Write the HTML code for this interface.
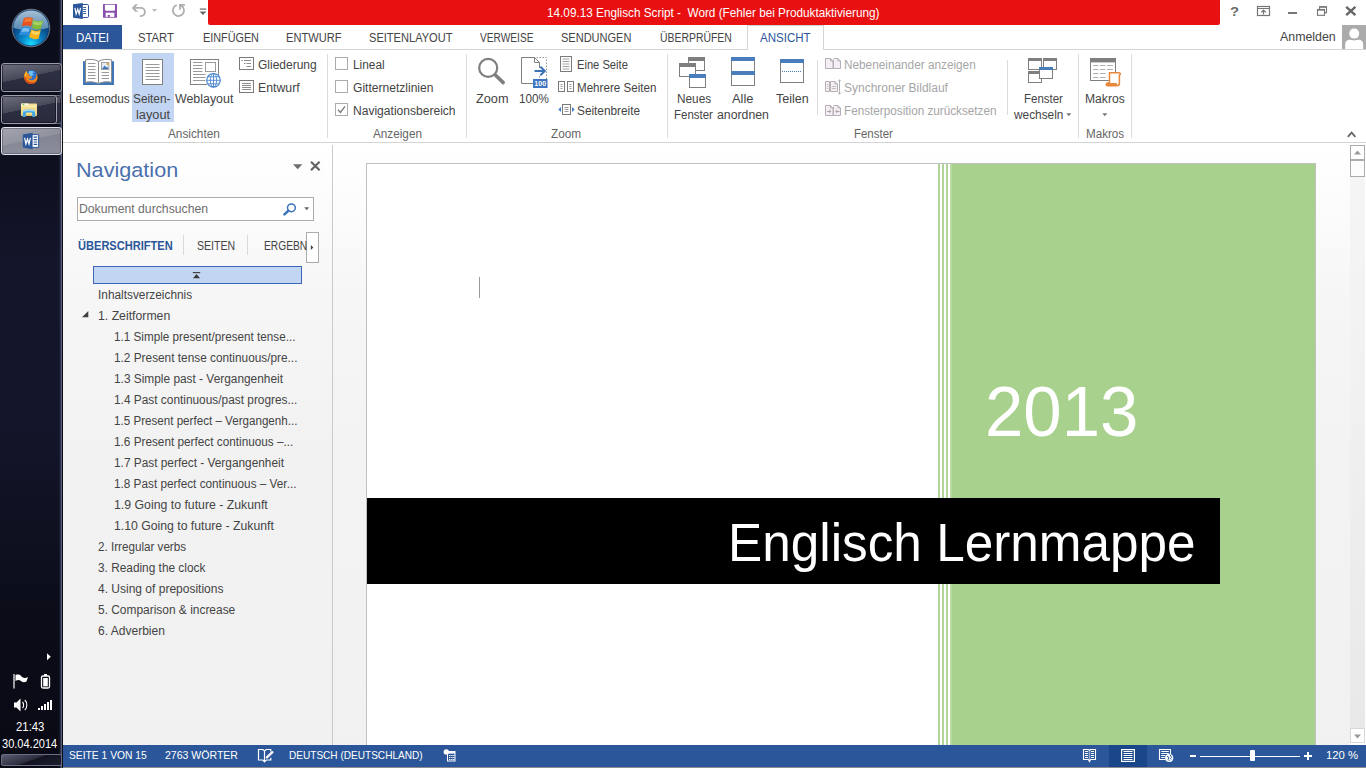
<!DOCTYPE html>
<html><head><meta charset="utf-8"><title>14.09.13 Englisch Script - Word</title>
<style>
*{box-sizing:border-box;margin:0;padding:0}
html,body{width:1366px;height:768px;overflow:hidden;background:#fff;font-family:"Liberation Sans",sans-serif}
.a{position:absolute}
.t{position:absolute;white-space:nowrap;line-height:1;transform-origin:0 50%;font-family:"Liberation Sans",sans-serif}
svg{position:absolute;overflow:visible}
/* taskbar */
#taskbar{position:absolute;left:0;top:0;width:63px;height:768px;background:linear-gradient(90deg,rgba(0,0,0,0) 0,rgba(0,0,0,0) 58px,rgba(30,36,70,.5) 60px,#5a5f78 61.5px,#0a0b14 62.5px),linear-gradient(180deg,#0b0d1a 0,#0c0e1c 140px,#13162a 260px,#13162a 430px,#0b0c18 620px,#090a14 100%)}
.tb{position:absolute;left:1px;width:61px;height:29px;border-radius:3px;border:1px solid #9b9daa;box-shadow:inset 0 0 0 1px rgba(10,10,20,.55);background:linear-gradient(168deg,rgba(255,255,255,.30) 0,rgba(255,255,255,.13) 46%,rgba(255,255,255,0) 47%),linear-gradient(180deg,#2f3144,#292b3d)}
.tb.act{border-color:#e2e3e8;box-shadow:inset 0 0 0 1px rgba(40,40,60,.35);background:linear-gradient(168deg,rgba(255,255,255,.28) 0,rgba(255,255,255,.10) 46%,rgba(255,255,255,0) 47%),linear-gradient(180deg,#7f818f,#8b8d9b)}
/* word */
#red{position:absolute;left:208px;top:0;width:1012px;height:25px;background:#e81010;border-bottom-right-radius:2px;border-bottom-left-radius:2px}
#filetab{position:absolute;left:63px;top:25px;width:59px;height:25px;background:#2b579a}
#tabline{position:absolute;left:63px;top:49px;width:1303px;height:1px;background:#d4d4d4}
#acttab{position:absolute;left:747px;top:25px;width:77px;height:25px;background:#fff;border:1px solid #d4d4d4;border-bottom:none}
#ribline{position:absolute;left:63px;top:142px;width:1303px;height:1px;background:#d4d4d4}
.sep{position:absolute;width:1px;background:#dcdcdc}
.cb{position:absolute;width:13px;height:13px;border:1px solid #ababab;background:#fff}
/* nav */
#nav{position:absolute;left:63px;top:143px;width:270px;height:602px;background:linear-gradient(180deg,#fff 0,#fdfdfd 40px,#f6f6f6 160px,#f2f2f2 300px,#f1f1f1 100%)}
#navborder{position:absolute;left:332px;top:145px;width:1px;height:600px;background:#cacaca}
#doc{position:absolute;left:333px;top:143px;width:1017px;height:602px;background:linear-gradient(180deg,#fff 0,#fdfdfd 40px,#f6f6f6 160px,#f3f3f3 300px,#f1f1f1 100%)}
#page{position:absolute;left:366px;top:163px;width:950px;height:582px;background:#fff;border-left:1px solid #c0c0c0;border-top:1px solid #c0c0c0;border-right:1px solid #c0c0c0}
#green{position:absolute;left:950px;top:164px;width:365px;height:581px;background:linear-gradient(90deg,#b8daa2 0,#b8daa2 1.5px,#a9d18e 2px)}
.stripe{position:absolute;top:164px;width:2px;height:581px;background:#b1d598}
#black{position:absolute;left:367px;top:498px;width:853px;height:86px;background:#000}
#status{position:absolute;left:63px;top:745px;width:1303px;height:23px;background:#2b579a;border-bottom:1px solid #8a8c92}
#vscroll{position:absolute;left:1350px;top:145px;width:15px;height:598px;background:linear-gradient(180deg,#f6f6f6 0,#f1f1f1 40%,#e8e8e8 100%)}

</style></head>
<body>
<!-- ================= TASKBAR ================= -->
<div id="taskbar">
  <!-- start orb -->
  <svg style="left:11px;top:8px" width="40" height="40" viewBox="0 0 40 40">
    <defs>
      <linearGradient id="orbtop" x1="0" y1="0" x2="0" y2="1">
        <stop offset="0" stop-color="#b9cddd"/><stop offset="1" stop-color="#5b8db5"/>
      </linearGradient>
      <radialGradient id="orbbot" cx="50%" cy="95%" r="70%">
        <stop offset="0" stop-color="#18dcff"/><stop offset=".35" stop-color="#0b8fd0"/><stop offset=".8" stop-color="#0b4f8c"/><stop offset="1" stop-color="#0a3f78"/>
      </radialGradient>
      <clipPath id="orbclip"><circle cx="20" cy="20" r="17.6"/></clipPath>
    </defs>
    <circle cx="20" cy="20" r="18.8" fill="#0a3f78" stroke="#7d8089" stroke-width=".9"/>
    <circle cx="20" cy="20" r="17.6" fill="url(#orbbot)"/>
    <g clip-path="url(#orbclip)">
      <path d="M0 0 H40 V19 C30 23 10 23 0 19Z" fill="url(#orbtop)" opacity=".95"/>
    </g>
    <path d="M12.8 10.2 C15.8 8.9 19 9 21.9 10 L20.2 18.4 C17.2 17.2 14 17.2 10.8 18.4Z" fill="#e8501e"/>
    <path d="M14 10.8 C16.5 10 19 10 21 10.6 L20.3 14 C18 13.4 15.5 13.6 13.2 14.4Z" fill="#f58a3c" opacity=".7"/>
    <path d="M22 11.8 C25.4 13.6 28.8 13.6 32.3 12.2 L29.8 20.8 C26.6 22 23.8 21.6 21 19.6Z" fill="#7fba3a"/>
    <path d="M22.6 13 C25.6 14.4 28.6 14.4 31.4 13.4 L30.4 16.8 C27.6 17.6 24.8 17.4 22 16Z" fill="#b5dc78" opacity=".7"/>
    <path d="M10.4 19.6 C13.6 18.4 16.6 18.6 19.5 19.9 L17.8 27.9 C14.8 26.4 11.6 26.2 8.2 27.5Z" fill="#2f8fdc"/>
    <path d="M11.4 20.6 C14 19.8 16.4 20 18.4 20.8 L17.7 24 C15.4 23.2 13 23.2 10.6 24Z" fill="#9dd2f5" opacity=".7"/>
    <path d="M20.2 21.4 C23.4 23.2 26.6 23.2 29.8 21.8 L27.6 30.8 C24.4 31.8 21.2 31.2 18 28.8Z" fill="#f9b21c"/>
    <path d="M20.8 22.8 C23.6 24.2 26.4 24.2 28.8 23.4 L28 26.6 C25.4 27.4 22.8 27 20.2 25.6Z" fill="#fde07a" opacity=".7"/>
  </svg>
  <!-- firefox -->
  <div class="tb" style="top:63px"></div>
  <svg style="left:23px;top:69px" width="16" height="16" viewBox="0 0 16 16">
    <circle cx="8.4" cy="6.6" r="5.6" fill="#2f6fd0"/>
    <path d="M6 2.4 C8 1.4 10.6 2 11.8 3.6 C10.4 3.2 9.4 3.6 9 4.6 C10.4 4.6 11 5.6 10.4 6.6 C9.4 6.2 8.4 6.6 8.2 7.6 C7.2 7.4 6.6 6.6 6.8 5.6 C5.8 5.2 5.4 3.6 6 2.4Z" fill="#6fc3f0"/>
    <path d="M1 7.6 C1 5 2.2 3 4 1.8 C3.6 3 3.8 4 4.6 4.8 C5 4.4 5.6 4.2 6.2 4.4 C5.6 5.4 6 6.6 7.2 7 C8.2 7.2 9 7.6 9.2 8.4 C8.6 9.8 6.8 10 5.6 9.2 C6.4 11.4 9.4 12 11.6 10.2 C13.2 8.8 13.6 6.6 13 4.6 C14 5.6 14.6 7.4 14.6 8.6 C14.4 12.4 11.6 15 8 15 C4 15 1 11.8 1 7.6Z" fill="#ee8a1c"/>
    <path d="M1.2 9 C2 12.6 4.8 15 8 15 C10.6 15 12.8 13.6 13.8 11.4 C11.6 13.6 7.8 14 5 12 C3.4 10.8 2.6 9.2 2.6 7.4Z" fill="#d8481a"/>
    <path d="M1.6 5.4 C2.2 3.8 3 2.6 4 1.8 C3.6 3 3.8 4 4.6 4.8 C3.4 5.6 3 7 3.4 8.4 C2.4 7.6 1.8 6.6 1.6 5.4Z" fill="#f7b52a"/>
  </svg>
  <!-- explorer -->
  <div class="tb" style="top:95px;left:6px;width:56px;border-color:#6c6f80"></div>
  <div class="tb" style="top:95px;width:56px"></div>
  <svg style="left:20px;top:102px" width="18" height="16" viewBox="0 0 18 16">
    <path d="M1 2 C1 1.6 1.3 1.4 1.6 1.4 H16.4 C16.8 1.4 17 1.7 17 2 V13.6 H1Z" fill="#f3dc8c"/>
    <path d="M1 2 C1 1.6 1.3 1.4 1.6 1.4 H8.4 L9.2 3 H1Z" fill="#fbf3cf"/>
    <rect x="2.6" y="1.8" width="1.8" height="1" fill="#3fc43a"/><rect x="4.6" y="1.8" width="3.4" height="1" fill="#fff"/>
    <path d="M1 3.4 H17 V13.6 H1Z" fill="#f4de8e"/>
    <path d="M1 3.4 H17 V5 H1Z" fill="#f9ebb4"/>
    <path d="M1 12.6 H17 V13.8 H1Z" fill="#e2c25e"/>
    <path d="M3.2 8 C6.4 7.2 11.6 7.2 14.8 8 L15.4 15 H12.4 L12 10.8 C10.4 10.4 7.6 10.4 6 10.8 L5.6 15 H2.6Z" fill="#45a6e6"/>
    <path d="M3.2 8 C6.4 7.2 11.6 7.2 14.8 8 L15 9.8 C11.6 8.8 6.4 8.8 3 9.8Z" fill="#a5dcf8"/>
  </svg>
  <!-- word (active) -->
  <div class="tb act" style="top:127px;height:28px"></div>
  <svg style="left:22px;top:132px" width="18" height="18" viewBox="0 0 18 18">
    <path d="M9.5 2.6 H16.6 V15.4 H9.5Z" fill="#fff" stroke="#2b579a" stroke-width="1"/>
    <path d="M11.6 5.2 H15.2 M11.6 7.6 H15.2 M11.6 10 H15.2 M11.6 12.4 H15.2" stroke="#2b579a" stroke-width="1.2"/>
    <path d="M0.8 2.4 L10.6 0.8 V17.2 L0.8 15.6Z" fill="#2b579a"/>
    <path d="M2.6 5.8 L3.9 12 L5.5 7 L7 12 L8.4 5.8" fill="none" stroke="#fff" stroke-width="1.2"/>
  </svg>
  <!-- tray -->
  <svg style="left:0;top:640px" width="63" height="128" viewBox="0 0 63 128">
    <path d="M47 13.3 L50.8 16.8 L47 20.3Z" fill="#fff"/>
    <!-- flag -->
    <path d="M14 34 V48.5" stroke="#fff" stroke-width="1.2"/>
    <path d="M15.5 35 C18 34 20 34.5 21.5 36.5 C23.5 38.5 26 38 28 37 L26.5 41.5 C24.5 42.5 22.5 42.5 21 41 C19.5 39.5 17.5 39.5 15.5 41Z" fill="#fff"/>
    <!-- battery -->
    <rect x="41.5" y="36" width="8" height="12" rx="1.5" fill="none" stroke="#fff" stroke-width="1.3"/>
    <rect x="44" y="34" width="3" height="2" fill="#fff"/>
    <rect x="43.2" y="38" width="4.6" height="8.4" fill="#fff"/>
    <!-- speaker -->
    <path d="M14 62.5 H16.5 L20.5 58.5 V71.5 L16.5 67.5 H14Z" fill="#fff"/>
    <path d="M22.5 62 C24 63.5 24 66.5 22.5 68 M24.8 60 C27.5 62.5 27.5 67.5 24.8 70" stroke="#fff" stroke-width="1.1" fill="none"/>
    <!-- signal -->
    <rect x="38" y="68" width="2" height="2" fill="#fff"/><rect x="41" y="66" width="2" height="4" fill="#fff"/><rect x="44" y="64" width="2" height="6" fill="#fff"/><rect x="47" y="62" width="2" height="8" fill="#fff"/><rect x="50" y="60" width="2" height="10" fill="#fff"/>
  </svg>
  <div class="a" style="left:1px;top:754px;width:61px;height:12px;border:1px solid #6a6e82;border-radius:2px;background:linear-gradient(160deg,#5a5d70 0,#2a2c3c 50%,#12131f 52%,#1c1e2e 100%)"></div>
</div>

<!-- ================= WORD TITLE ================= -->
<div id="red"></div>
<!-- word icon -->
<svg style="left:72px;top:2px" width="18" height="18" viewBox="0 0 18 18">
  <rect x="9" y="2.5" width="7.5" height="13" rx="1.2" fill="#fff" stroke="#2b579a" stroke-width="1"/>
  <path d="M11.2 5.5 H14.1 M11.2 7.5 H14.1 M11.2 9.5 H14.1 M11.2 11.5 H14.1" stroke="#2b579a" stroke-width=".95"/>
  <path d="M1 2.3 L10.8 1 V17 L1 15.7Z" fill="#2b579a"/>
  <path d="M2.9 5.9 L4.1 12 L5.7 7.2 L7.2 12 L8.5 5.9" fill="none" stroke="#fff" stroke-width="1.2"/>
</svg>
<!-- save -->
<svg style="left:103px;top:4px" width="14" height="14" viewBox="0 0 14 14">
  <rect x="0" y="0" width="14" height="13.8" rx=".6" fill="#8a4fae"/>
  <path d="M1.9 0.7 H12 V5.6 C12 6.4 11.5 6.8 10.8 6.8 H3.1 C2.4 6.8 1.9 6.4 1.9 5.6Z" fill="#fff"/>
  <rect x="2.7" y="8.7" width="8.6" height="4.2" fill="#fff"/>
  <rect x="4.7" y="10.9" width="2.2" height="2" fill="#8a4fae"/>
</svg>
<!-- undo -->
<svg style="left:131px;top:4px" width="28" height="14" viewBox="0 0 28 14">
  <path d="M4.2 0.15 H7 L3.4 3.9 L7 7.75 H4.2 L0.9 3.9Z" fill="#b0aeb0"/>
  <path d="M2.5 3.9 H9.8 A4.1 4.1 0 0 1 9.8 12.1 H8.9" fill="none" stroke="#b0aeb0" stroke-width="1.9"/>
  <path d="M20.9 5.1 H26.1 L23.5 7.9Z" fill="#bdbdbd"/>
</svg>
<!-- redo -->
<svg style="left:171px;top:3px" width="16" height="15" viewBox="0 0 16 15">
  <path d="M5.73 2.13 A5.6 5.6 0 1 0 11.6 3.7 L9.6 2.2" fill="none" stroke="#b0aeb0" stroke-width="1.8"/>
  <path d="M13.9 1.9 H9 V6.7" fill="none" stroke="#b0aeb0" stroke-width="1.8"/>
  <path d="M8.1 1 H12 L8.1 5Z" fill="#b0aeb0" opacity=".75"/>
</svg>
<!-- qat customise -->
<svg style="left:199px;top:8px" width="8" height="8" viewBox="0 0 8 8">
  <rect x="0.8" y="0.5" width="6.4" height="1.2" fill="#666"/><path d="M0.6 3.5 H7.4 L4 7Z" fill="#666"/>
</svg>
<!-- window controls -->
<svg style="left:1256px;top:5px" width="15" height="12" viewBox="0 0 15 12">
  <rect x="1.5" y="1.5" width="12" height="9" fill="none" stroke="#767676" stroke-width="1.2"/>
  <path d="M1.5 3.5 H13.5" stroke="#767676" stroke-width="1"/>
  <path d="M7.5 9.4 V5.2 M5.3 7.4 L7.5 5.1 L9.7 7.4" fill="none" stroke="#767676" stroke-width="1.2"/>
</svg>
<div class="a" style="left:1288px;top:11.5px;width:9px;height:2.6px;background:#777"></div>
<svg style="left:1316px;top:6px" width="12" height="11" viewBox="0 0 12 11">
  <path d="M3.6 3 V0.8 H10.5 V6.6 H8.8" fill="none" stroke="#767676" stroke-width="1.1"/>
  <path d="M3.1 1 H11" stroke="#767676" stroke-width="1.5"/>
  <rect x="1.5" y="3.5" width="7" height="5.8" fill="#fff" stroke="#767676" stroke-width="1.1"/>
  <path d="M1 3.8 H9" stroke="#767676" stroke-width="1.6"/>
</svg>
<svg style="left:1345px;top:6px" width="12" height="10" viewBox="0 0 12 10">
  <path d="M1.2 0.8 L10.4 9.2 M10.4 0.8 L1.2 9.2" stroke="#666" stroke-width="2.4"/>
</svg>

<!-- ================= TABS ================= -->
<div id="filetab"></div>
<div id="tabline"></div>
<div id="acttab"></div>
<!-- avatar -->
<svg style="left:1342px;top:25px" width="24" height="24" viewBox="0 0 24 24">
  <rect width="24" height="24" fill="#ababab"/>
  <circle cx="12.2" cy="8.6" r="5" fill="#fff"/>
  <path d="M3.2 24 V19.5 C3.2 14.5 7 13.8 12.2 15.4 C17.4 13.8 21.2 14.5 21.2 19.5 V24Z" fill="#fff"/>
</svg>

<!-- ================= RIBBON ================= -->
<div id="ribline"></div>
<div class="a" style="left:132px;top:53px;width:42px;height:69px;background:#c2d5f2"></div>
<!-- separators -->
<div class="sep" style="left:327px;top:54px;height:84px"></div>
<div class="sep" style="left:466px;top:54px;height:84px"></div>
<div class="sep" style="left:667px;top:54px;height:84px"></div>
<div class="sep" style="left:817px;top:60px;height:55px"></div>
<div class="sep" style="left:1007px;top:60px;height:55px"></div>
<div class="sep" style="left:1078px;top:54px;height:84px"></div>
<div class="sep" style="left:1131px;top:54px;height:84px"></div>

<!-- Lesemodus icon -->
<svg style="left:83px;top:59px" width="32" height="27" viewBox="0 0 32 27">
  <path d="M0 2.2 H31 V26 H0Z" fill="#3f76b8"/>
  <path d="M2.5 0.9 C7 -0.1 11.6 0.3 15.5 2.3 C19.4 0.3 24 -0.1 28.5 0.9 V23.3 C24 22.5 19.4 22.7 15.5 24.5 C11.6 22.7 7 22.5 2.5 23.3Z" fill="#fff" stroke="#8c8c8c" stroke-width="1"/>
  <path d="M15.5 2.3 V24.3" stroke="#8c8c8c" stroke-width="1"/>
  <path d="M5 4.5 H12.5 M5 7.5 H12.5 M5 10.5 H12.5 M5 13.5 H12.5 M5 16.5 H12.5 M5 19.5 H12.5 M18.5 13.5 H26 M18.5 16.5 H26 M18.5 19.5 H26" stroke="#9a9a9a" stroke-width="1"/>
  <rect x="18.5" y="3.5" width="7.4" height="7" fill="#e4ecf7" stroke="#9a9a9a" stroke-width=".9"/>
  <path d="M19 10 L21.6 6.6 L23.2 8.4 L24.2 7.6 L25.4 10Z" fill="#3f76b8"/>
  <rect x="23.6" y="4" width="1.9" height="1.9" fill="#f0a030"/>
</svg>
<!-- Seitenlayout icon -->
<svg style="left:142px;top:59px" width="22" height="27" viewBox="0 0 22 27">
  <rect x="0.5" y="0.5" width="20" height="25" fill="#fff" stroke="#808080" stroke-width="1"/>
  <path d="M3.5 5.5 H17.5 M3.5 8.5 H17.5 M3.5 11.5 H17.5 M3.5 14.5 H17.5 M3.5 17.5 H17.5 M3.5 20.5 H17.5" stroke="#9a9a9a" stroke-width="1"/>
</svg>
<!-- Weblayout icon -->
<svg style="left:190px;top:59px" width="32" height="30" viewBox="0 0 32 30">
  <rect x="0.5" y="0.5" width="28" height="25" fill="#fff" stroke="#808080" stroke-width="1"/>
  <path d="M3 3.5 H12.5 M3 6.5 H12.5 M3 9.5 H12.5 M3 12.5 H12.5 M3 15.5 H15.5 M3 18.5 H15.5 M3 21.5 H15.5" stroke="#9a9a9a" stroke-width="1"/>
  <rect x="15.5" y="3.5" width="10" height="9" fill="#fff" stroke="#9a9a9a" stroke-width="1"/>
  <circle cx="23.5" cy="21.3" r="7.6" fill="#fff"/>
  <circle cx="23.5" cy="21.3" r="6.8" fill="#fff" stroke="#4a86d0" stroke-width="1.2"/>
  <ellipse cx="23.5" cy="21.3" rx="3.1" ry="6.8" fill="none" stroke="#4a86d0" stroke-width=".9"/>
  <path d="M16.8 21.3 H30.2 M23.5 14.5 V28.1 M18 17.8 H29 M18 24.8 H29" stroke="#4a86d0" stroke-width=".9"/>
</svg>
<!-- Gliederung icon -->
<svg style="left:239px;top:57px" width="15" height="13" viewBox="0 0 15 13">
  <rect x="0.5" y="0.5" width="14" height="12" fill="#fff" stroke="#7a7a7a" stroke-width="1"/>
  <path d="M2.5 3.5 H4 M5 3.5 H12 M5 6.5 H6.5 M7.5 6.5 H12 M7.5 9.5 H12" stroke="#8c8c8c" stroke-width="1"/>
</svg>
<!-- Entwurf icon -->
<svg style="left:239px;top:80px" width="15" height="13" viewBox="0 0 15 13">
  <rect x="0.5" y="0.5" width="14" height="12" fill="#fff" stroke="#7a7a7a" stroke-width="1"/>
  <path d="M3 3.5 H12 M3 5.5 H12 M3 7.5 H12 M3 9.5 H12" stroke="#8c8c8c" stroke-width="1"/>
</svg>
<!-- checkboxes -->
<div class="cb" style="left:335px;top:57px"></div>
<div class="cb" style="left:335px;top:80px"></div>
<div class="cb" style="left:335px;top:103px"></div>
<svg style="left:335px;top:103px" width="13" height="13" viewBox="0 0 13 13">
  <path d="M3 6.8 L5.4 9.4 L10 3.4" fill="none" stroke="#777" stroke-width="1.3"/>
</svg>
<!-- Zoom magnifier -->
<svg style="left:476px;top:56px" width="30" height="30" viewBox="0 0 30 30">
  <circle cx="12.2" cy="11.9" r="9" fill="#fff" stroke="#7f7f7f" stroke-width="2.2"/>
  <path d="M19.4 19 L27.2 26.6" stroke="#7f7f7f" stroke-width="3.6" stroke-linecap="round"/>
</svg>
<!-- 100% icon -->
<svg style="left:520px;top:56px" width="28" height="32" viewBox="0 0 28 32">
  <path d="M13.5 1.5 H26.5 V23" fill="none" stroke="#9a9a9a" stroke-width="1" stroke-dasharray="1.5 1.5"/>
  <path d="M13 27.5 H1.5 V1.5 H14.5 L19.5 6.5 V12" fill="#fff" stroke="#7f7f7f" stroke-width="1"/>
  <path d="M14.5 1.5 V6.5 H19.5" fill="none" stroke="#7f7f7f" stroke-width="1"/>
  <path d="M14.5 15 H24.5 M20.3 10.8 L24.8 15 L20.3 19.2" fill="none" stroke="#3b73b9" stroke-width="2"/>
  <path d="M19.5 20 V23" stroke="#9a9a9a" stroke-width="1" stroke-dasharray="1.5 1.5"/>
  <rect x="13" y="23" width="14.5" height="9" fill="#3f74c0"/>
  <text x="20.2" y="30.2" font-family="Liberation Sans, sans-serif" font-size="7" font-weight="bold" fill="#fff" text-anchor="middle">100</text>
</svg>
<!-- Eine Seite -->
<svg style="left:560px;top:56px" width="13" height="16" viewBox="0 0 13 16">
  <rect x="0.5" y="0.5" width="11" height="15" fill="#fff" stroke="#7a7a7a" stroke-width="1"/>
  <path d="M2.5 3 H9.5 M2.5 5.5 H9.5 M2.5 8 H9.5 M2.5 10.5 H9.5 M2.5 13 H9.5" stroke="#a0a0a0" stroke-width="1"/>
</svg>
<!-- Mehrere Seiten -->
<svg style="left:558px;top:81px" width="17" height="11" viewBox="0 0 17 11">
  <rect x="0.5" y="0.5" width="6" height="10" fill="#fff" stroke="#7a7a7a" stroke-width="1"/>
  <rect x="9.5" y="0.5" width="6" height="10" fill="#fff" stroke="#7a7a7a" stroke-width="1"/>
  <path d="M2.5 3.5 H4.5 M2.5 5.5 H4.5 M2.5 7.5 H4.5 M11.5 3.5 H13.5 M11.5 5.5 H13.5 M11.5 7.5 H13.5" stroke="#9a9a9a" stroke-width="1"/>
</svg>
<!-- Seitenbreite -->
<svg style="left:558px;top:104px" width="17" height="11" viewBox="0 0 17 11">
  <rect x="4.5" y="0.5" width="8" height="10" fill="#fff" stroke="#7a7a7a" stroke-width="1"/>
  <path d="M6.5 3.5 H10.5 M6.5 5.5 H10.5 M6.5 7.5 H10.5" stroke="#9a9a9a" stroke-width="1"/>
  <path d="M3 3 V8 L0.3 5.5Z M14 3 V8 L16.7 5.5Z" fill="#3f7fd0"/>
</svg>
<!-- Neues Fenster -->
<svg style="left:679px;top:57px" width="28" height="31" viewBox="0 0 28 31">
  <rect x="9.5" y="0.5" width="16" height="13" fill="#fff" stroke="#7f7f7f" stroke-width="1"/>
  <rect x="9" y="0" width="17" height="4" fill="#7f7f7f"/>
  <rect x="0.5" y="6.5" width="16" height="13" fill="#fff" stroke="#7f7f7f" stroke-width="1"/>
  <rect x="0" y="6" width="17" height="4" fill="#7f7f7f"/>
  <rect x="10.5" y="17.5" width="16" height="13" fill="#fff" stroke="#7f7f7f" stroke-width="1"/>
  <rect x="10" y="17" width="17" height="4" fill="#4a7ebb"/>
</svg>
<!-- Alle anordnen -->
<svg style="left:731px;top:57px" width="25" height="30" viewBox="0 0 25 30">
  <rect x="0.5" y="0.5" width="23" height="28" fill="#fff" stroke="#7f7f7f" stroke-width="1"/>
  <rect x="0" y="0" width="24" height="4" fill="#4a7ebb"/>
  <rect x="0" y="14" width="24" height="4" fill="#4a7ebb"/>
</svg>
<!-- Teilen -->
<svg style="left:780px;top:59px" width="25" height="24" viewBox="0 0 25 24">
  <rect x="0.5" y="0.5" width="23" height="23" fill="#fff" stroke="#7f7f7f" stroke-width="1"/>
  <rect x="0" y="0" width="24" height="4" fill="#4a7ebb"/>
  <path d="M2 12.5 H22" stroke="#4a7ebb" stroke-width="1" stroke-dasharray="1 1"/>
</svg>
<!-- disabled small icons -->
<svg style="left:825px;top:58px" width="17" height="11" viewBox="0 0 17 11">
  <path d="M0.5 0.5 H5.5 L8 3 V10.5 H0.5Z M8.5 0.5 H13 L15.5 3 V10.5 H8.5Z" fill="#f5eff5" stroke="#b4b0b4" stroke-width="1"/>
  <path d="M5.5 0.5 V3 H8 M13 0.5 V3 H15.5" fill="none" stroke="#b4b0b4" stroke-width="1"/>
  <path d="M6 0 H8.5 V2.4Z M13.5 0 H16 V2.4Z" fill="#fff"/>
</svg>
<svg style="left:825px;top:79px" width="17" height="16" viewBox="0 0 17 16">
  <path d="M0.5 2.5 H4.5 V12.5 H0.5Z M5.5 2.5 H10 L12.5 5 V12.5 H5.5Z" fill="#f5eff5" stroke="#b4b0b4" stroke-width="1"/>
  <path d="M10 2.5 V5 H12.5" fill="none" stroke="#b4b0b4" stroke-width="1"/>
  <path d="M2 5.5 H3.2 M2 7.5 H3.2 M2 9.5 H3.2 M7.2 7.5 H10.8 M7.2 9.5 H10.8" stroke="#c0bcc0" stroke-width="1"/>
  <path d="M14.5 0.8 V15.2 M13.1 2.4 L14.5 0.8 L15.9 2.4 M13.1 13.6 L14.5 15.2 L15.9 13.6" fill="none" stroke="#a8a8a8" stroke-width=".9"/>
</svg>
<svg style="left:825px;top:105px" width="17" height="11" viewBox="0 0 17 11">
  <path d="M0.5 0.5 H5.5 L8 3 V10.5 H0.5Z M8.5 0.5 H13 L15.5 3 V10.5 H8.5Z" fill="#f5eff5" stroke="#b4b0b4" stroke-width="1"/>
  <path d="M5.5 0.5 V3 H8 M13 0.5 V3 H15.5" fill="none" stroke="#b4b0b4" stroke-width="1"/>
  <path d="M6 0 H8.5 V2.4Z M13.5 0 H16 V2.4Z" fill="#fff"/>
  <path d="M2 6.5 H6.2 M4.8 4.8 V8.2 M10.4 6.5 H14.6 M11.8 4.8 V8.2" fill="none" stroke="#aaa6aa" stroke-width="1"/>
</svg>
<!-- Fenster wechseln -->
<svg style="left:1028px;top:58px" width="30" height="26" viewBox="0 0 30 26">
  <rect x="0.5" y="0.5" width="13" height="11" fill="#fff" stroke="#7f7f7f" stroke-width="1"/><rect x="0" y="0" width="14" height="3" fill="#7f7f7f"/>
  <rect x="15.5" y="0.5" width="13" height="11" fill="#fff" stroke="#7f7f7f" stroke-width="1"/><rect x="15" y="0" width="14" height="3" fill="#7f7f7f"/>
  <rect x="0.5" y="13.5" width="13" height="11" fill="#fff" stroke="#7f7f7f" stroke-width="1"/><rect x="0" y="13" width="14" height="3" fill="#7f7f7f"/>
  <rect x="11.5" y="9.5" width="13" height="11" fill="#fff" stroke="#7f7f7f" stroke-width="1"/><rect x="11" y="9" width="14" height="3" fill="#4a7ebb"/>
</svg>
<svg style="left:1066px;top:113px" width="6" height="4" viewBox="0 0 6 4"><path d="M0.3 0.3 H5.3 L2.8 3.3Z" fill="#777"/></svg>
<!-- Makros -->
<svg style="left:1090px;top:58px" width="32" height="29" viewBox="0 0 32 29">
  <rect x="0.5" y="0.5" width="25" height="22" fill="#fff" stroke="#7f7f7f" stroke-width="1"/>
  <rect x="0" y="0" width="26" height="4.4" fill="#7f7f7f"/>
  <path d="M3 7.5 H8.5 M10 7.5 H15.5 M17 7.5 H23 M3 11.5 H8.5 M10 11.5 H15.5 M17 11.5 H23 M3 15.5 H8.5 M10 15.5 H15.5 M3 19.5 H8.5 M10 19.5 H15.5" stroke="#b0b0b0" stroke-width="1"/>
  <path d="M19.5 14.8 H29 C30.6 14.8 30.8 16.6 29.4 17 V25.6 C29.4 27.6 27 27.8 26.4 27.8 H17.6 C15.8 27.8 15.8 25 17.6 25 H19.5Z" fill="#fff" stroke="#e8883a" stroke-width="1.5"/>
  <path d="M17.4 25 H26 C27.4 25 27.4 27.8 26 27.8 H17.4 C15.8 27.6 15.8 25.2 17.4 25Z" fill="#e8883a"/>
</svg>
<svg style="left:1102px;top:113px" width="6" height="4" viewBox="0 0 6 4"><path d="M0.3 0.3 H5.3 L2.8 3.3Z" fill="#777"/></svg>
<!-- collapse ribbon chevron -->
<svg style="left:1347px;top:131px" width="10" height="7" viewBox="0 0 10 7"><path d="M0.8 5.8 L4.6 1.6 L8.4 5.8" fill="none" stroke="#666" stroke-width="1.8"/></svg>

<!-- ================= NAV PANE ================= -->
<div id="nav"></div>
<div id="navborder"></div>
<svg style="left:293px;top:164px" width="10" height="6" viewBox="0 0 10 6"><path d="M0 0.2 H9.4 L4.7 5.2Z" fill="#6e6e6e"/></svg>
<svg style="left:310px;top:161px" width="11" height="10" viewBox="0 0 11 10"><path d="M1 0.8 L9.6 9.2 M9.6 0.8 L1 9.2" stroke="#646464" stroke-width="2.2"/></svg>
<div class="a" style="left:77px;top:197px;width:237px;height:24px;background:#fff;border:1px solid #ababab"></div>
<svg style="left:283px;top:203px" width="14" height="13" viewBox="0 0 14 13">
  <circle cx="8.4" cy="4.8" r="3.9" fill="#fff" stroke="#3b73b9" stroke-width="1.5"/>
  <path d="M5.4 7.8 L1.4 11.4" stroke="#3b73b9" stroke-width="2.5" stroke-linecap="round"/>
</svg>
<svg style="left:304px;top:207px" width="6" height="4" viewBox="0 0 6 4"><path d="M0.2 0.3 H5.2 L2.7 3.2Z" fill="#666"/></svg>
<div class="sep" style="left:183px;top:235px;height:20px;background:#dadada"></div>
<div class="sep" style="left:247px;top:235px;height:20px;background:#dadada"></div>
<div class="a" style="left:306px;top:232px;width:13px;height:31px;background:#fff;border:1px solid #ababab"></div>
<svg style="left:310px;top:244px" width="4" height="7" viewBox="0 0 4 7"><path d="M0.8 1 L3.3 3.5 L0.8 6Z" fill="#444"/></svg>
<div class="a" style="left:93px;top:266px;width:209px;height:18px;background:#c2d5f2;border:1px solid #3b67b5"></div>
<svg style="left:192px;top:272px" width="9" height="7" viewBox="0 0 9 7"><path d="M0.8 0.6 H8.2" stroke="#3a3a3a" stroke-width="1.1"/><path d="M1 6.3 H8 L4.5 2Z" fill="#3a3a3a"/></svg>
<svg style="left:82px;top:310.6px" width="7" height="7" viewBox="0 0 7 7"><path d="M6.3 0 V6.3 H0Z" fill="#404040"/></svg>

<!-- ================= DOCUMENT ================= -->
<div id="doc"></div>
<div id="page"></div>
<div class="stripe" style="left:938px"></div>
<div class="stripe" style="left:942px"></div>
<div class="stripe" style="left:946px"></div>
<div id="green"></div>
<div id="black"></div>
<div class="a" style="left:479px;top:277px;width:1px;height:21px;background:#9a9a9a"></div>
<!-- scrollbar -->
<div id="vscroll"></div>
<div class="a" style="left:1350px;top:145px;width:15px;height:15px;background:#fff;border:1px solid #ababab"></div>
<svg style="left:1354px;top:150px" width="8" height="5" viewBox="0 0 8 5"><path d="M0 4.4 H7 L3.5 0.6Z" fill="#9a9a9a"/></svg>
<div class="a" style="left:1350px;top:160px;width:15px;height:17px;background:#fdfdfd;border:1px solid #ababab"></div>
<div class="a" style="left:1350px;top:728px;width:15px;height:15px;background:#fff;border:1px solid #d8d8d8"></div>
<svg style="left:1354px;top:734px" width="8" height="5" viewBox="0 0 8 5"><path d="M0 0.4 H7 L3.5 4.4Z" fill="#9a9a9a"/></svg>

<!-- ================= STATUS BAR ================= -->
<div id="status"></div>
<svg style="left:257px;top:748px" width="18" height="15" viewBox="0 0 18 15">
  <path d="M13.8 3.6 V1.5 H9.2 L7.5 3 L5.8 1.5 H1.5 V12 H5.8 L7.5 13.8 L9.2 12 H13.8 V9.8 M7.5 3 V13" fill="none" stroke="#fff" stroke-width="1.2"/>
  <path d="M9.9 9.4 L15.4 4.2" stroke="#fff" stroke-width="2.3" stroke-linecap="round"/>
  <path d="M11 8.4 L14.4 5.2" stroke="#2b579a" stroke-width=".5" stroke-dasharray=".5 .7"/>
</svg>
<svg style="left:442px;top:749px" width="14" height="13" viewBox="0 0 14 13">
  <rect x="5.5" y="2.5" width="7.5" height="9.5" fill="none" stroke="#fff" stroke-width="1"/>
  <rect x="5.5" y="2" width="7.5" height="2.6" fill="#fff"/>
  <path d="M7 6.5 H8.4 M9.2 6.5 H10.6 M11.2 6.5 H12.4 M7 8.5 H8.4 M9.2 8.5 H10.6 M11.2 8.5 H12.4 M7 10.5 H8.4 M9.2 10.5 H10.6 M11.2 10.5 H12.4" stroke="#fff" stroke-width="1.1"/>
  <circle cx="4.3" cy="2.9" r="2.7" fill="#fff"/>
</svg>
<!-- view buttons -->
<svg style="left:1083px;top:749px" width="14" height="14" viewBox="0 0 14 14">
  <path d="M0.5 0.5 H5.4 L6.5 1.4 L7.6 0.5 H12.5 V10.5 H7.6 L6.5 12.6 L5.4 10.5 H0.5Z" fill="none" stroke="#fff" stroke-width="1.1"/>
  <path d="M6.5 1.4 V12" stroke="#fff" stroke-width="1.6" stroke-dasharray="1.2 .8"/>
  <path d="M2 2.5 H5 M2 4.5 H5 M2 6.5 H5 M2 8.5 H5 M8 2.5 H11 M8 4.5 H11 M8 6.5 H11 M8 8.5 H11" stroke="#fff" stroke-width="1"/>
</svg>
<div class="a" style="left:1109px;top:745px;width:38px;height:22px;background:#19478a"></div>
<svg style="left:1121px;top:749px" width="15" height="14" viewBox="0 0 15 14">
  <rect x="0.6" y="0.6" width="12.8" height="11.8" fill="none" stroke="#fff" stroke-width="1.2"/>
  <path d="M2.5 2.5 H11.5 M2.5 4.5 H11.5 M2.5 6.5 H11.5 M2.5 8.5 H11.5 M2.5 10.5 H11.5" stroke="#fff" stroke-width="1"/>
</svg>
<svg style="left:1159px;top:749px" width="15" height="14" viewBox="0 0 15 14">
  <path d="M6.4 10.5 H0.5 V0.5 H11.5 V5" fill="none" stroke="#fff" stroke-width="1.1"/>
  <path d="M2.2 2.5 H9.8 M2.2 4.5 H9.8 M2.2 6.5 H6.4 M2.2 8.5 H5.8" stroke="#fff" stroke-width="1"/>
  <circle cx="10.2" cy="9" r="4.1" fill="#fff"/>
  <path d="M8 7.4 L9.8 8.2 L9.2 10.6 L10.4 11.8 M11 5.8 L12.6 8.4 L11.4 9.6 L12.4 10.6" fill="none" stroke="#2b579a" stroke-width="1"/>
</svg>
<div class="a" style="left:1190px;top:755px;width:6px;height:2px;background:#fff"></div>
<div class="a" style="left:1200px;top:755.5px;width:100px;height:1px;background:#fff"></div>
<div class="a" style="left:1250px;top:750px;width:5px;height:11px;background:#fff;border-radius:1px"></div>
<div class="a" style="left:1304px;top:755px;width:8px;height:2px;background:#fff"></div>
<div class="a" style="left:1307px;top:752px;width:2px;height:8px;background:#fff"></div>

<div id="texts">
<span class="t" id="t0" style="left:547.0px;top:6.84px;font-size:12px;color:#fff;transform:scaleX(0.9798);">14.09.13 Englisch Script - &nbsp;Word (Fehler bei Produktaktivierung)</span>
<span class="t" id="t1" style="left:75.7px;top:31.84px;font-size:12px;color:#fff;transform:scaleX(0.9590);">DATEI</span>
<span class="t" id="t2" style="left:138.3px;top:31.84px;font-size:12px;color:#444;transform:scaleX(0.9400);">START</span>
<span class="t" id="t3" style="left:202.8px;top:31.84px;font-size:12px;color:#444;transform:scaleX(0.9020);">EINFÜGEN</span>
<span class="t" id="t4" style="left:286.3px;top:31.84px;font-size:12px;color:#444;transform:scaleX(0.9240);">ENTWURF</span>
<span class="t" id="t5" style="left:369.3px;top:31.84px;font-size:12px;color:#444;transform:scaleX(0.9223);">SEITENLAYOUT</span>
<span class="t" id="t6" style="left:480.3px;top:31.84px;font-size:12px;color:#444;transform:scaleX(0.8464);">VERWEISE</span>
<span class="t" id="t7" style="left:561.3px;top:31.84px;font-size:12px;color:#444;transform:scaleX(0.9185);">SENDUNGEN</span>
<span class="t" id="t8" style="left:659.7px;top:31.84px;font-size:12px;color:#444;transform:scaleX(0.8688);">ÜBERPRÜFEN</span>
<span class="t" id="t9" style="left:759.6px;top:31.84px;font-size:12px;color:#2b579a;transform:scaleX(0.9614);">ANSICHT</span>
<span class="t" id="t10" style="left:1279.5px;top:30.84px;font-size:12px;color:#444;transform:scaleX(1.0313);">Anmelden</span>
<span class="t" id="t11" style="left:1229.9px;top:4.67px;font-size:13.5px;color:#6a6a6a;font-weight:bold;transform:scaleX(1.0933);">?</span>
<span class="t" id="t12" style="left:68.8px;top:92.84px;font-size:12px;color:#444;transform:scaleX(0.9789);">Lesemodus</span>
<span class="t" id="t13" style="left:133.3px;top:92.84px;font-size:12px;color:#444;transform:scaleX(0.9845);">Seiten-</span>
<span class="t" id="t14" style="left:135.7px;top:108.84px;font-size:12px;color:#444;transform:scaleX(1.0627);">layout</span>
<span class="t" id="t15" style="left:175.3px;top:92.84px;font-size:12px;color:#444;transform:scaleX(1.0329);">Weblayout</span>
<span class="t" id="t16" style="left:168.3px;top:127.84px;font-size:12px;color:#666;transform:scaleX(0.9836);">Ansichten</span>
<span class="t" id="t17" style="left:257.9px;top:58.84px;font-size:12px;color:#444;transform:scaleX(0.9987);">Gliederung</span>
<span class="t" id="t18" style="left:257.9px;top:81.84px;font-size:12px;color:#444;transform:scaleX(1.0259);">Entwurf</span>
<span class="t" id="t19" style="left:352.8px;top:58.84px;font-size:12px;color:#444;transform:scaleX(0.9909);">Lineal</span>
<span class="t" id="t20" style="left:352.8px;top:81.84px;font-size:12px;color:#444;transform:scaleX(1.0049);">Gitternetzlinien</span>
<span class="t" id="t21" style="left:352.8px;top:104.84px;font-size:12px;color:#444;transform:scaleX(1.0047);">Navigationsbereich</span>
<span class="t" id="t22" style="left:372.5px;top:127.84px;font-size:12px;color:#666;transform:scaleX(0.9779);">Anzeigen</span>
<span class="t" id="t23" style="left:475.7px;top:92.84px;font-size:12px;color:#444;transform:scaleX(1.0604);">Zoom</span>
<span class="t" id="t24" style="left:518.8px;top:92.84px;font-size:12px;color:#444;transform:scaleX(0.9751);">100%</span>
<span class="t" id="t25" style="left:576.7px;top:58.84px;font-size:12px;color:#444;transform:scaleX(0.9294);">Eine Seite</span>
<span class="t" id="t26" style="left:576.7px;top:81.84px;font-size:12px;color:#444;transform:scaleX(0.9670);">Mehrere Seiten</span>
<span class="t" id="t27" style="left:576.7px;top:104.84px;font-size:12px;color:#444;transform:scaleX(0.9843);">Seitenbreite</span>
<span class="t" id="t28" style="left:551.3px;top:127.84px;font-size:12px;color:#666;transform:scaleX(0.9822);">Zoom</span>
<span class="t" id="t29" style="left:676.6px;top:92.84px;font-size:12px;color:#444;transform:scaleX(0.9842);">Neues</span>
<span class="t" id="t30" style="left:673.6px;top:108.84px;font-size:12px;color:#444;transform:scaleX(0.9571);">Fenster</span>
<span class="t" id="t31" style="left:732.3px;top:92.84px;font-size:12px;color:#444;transform:scaleX(1.0712);">Alle</span>
<span class="t" id="t32" style="left:716.6px;top:108.84px;font-size:12px;color:#444;transform:scaleX(1.0241);">anordnen</span>
<span class="t" id="t33" style="left:775.6px;top:92.84px;font-size:12px;color:#444;transform:scaleX(1.0408);">Teilen</span>
<span class="t" id="t34" style="left:843.6px;top:58.84px;font-size:12px;color:#a6a6a6;transform:scaleX(0.9823);">Nebeneinander anzeigen</span>
<span class="t" id="t35" style="left:843.6px;top:81.84px;font-size:12px;color:#a6a6a6;transform:scaleX(0.9988);">Synchroner Bildlauf</span>
<span class="t" id="t36" style="left:843.6px;top:104.84px;font-size:12px;color:#a6a6a6;transform:scaleX(0.9773);">Fensterposition zurücksetzen</span>
<span class="t" id="t37" style="left:853.8px;top:127.84px;font-size:12px;color:#666;transform:scaleX(0.9546);">Fenster</span>
<span class="t" id="t38" style="left:1023.8px;top:92.84px;font-size:12px;color:#444;transform:scaleX(0.9571);">Fenster</span>
<span class="t" id="t39" style="left:1013.7px;top:108.84px;font-size:12px;color:#444;transform:scaleX(0.9862);">wechseln</span>
<span class="t" id="t40" style="left:1084.8px;top:92.84px;font-size:12px;color:#444;transform:scaleX(1.0101);">Makros</span>
<span class="t" id="t41" style="left:1086.1px;top:127.84px;font-size:12px;color:#666;transform:scaleX(0.9694);">Makros</span>
<span class="t" id="t42" style="left:76.1px;top:159.65px;font-size:20.5px;color:#4a70ad;transform:scaleX(1.0550);">Navigation</span>
<span class="t" id="t43" style="left:79.3px;top:202.84px;font-size:12px;color:#6d6d6d;transform:scaleX(1.0181);">Dokument durchsuchen</span>
<span class="t" id="t44" style="left:77.7px;top:239.84px;font-size:12px;color:#2b579a;font-weight:bold;transform:scaleX(0.9227);">ÜBERSCHRIFTEN</span>
<span class="t" id="t45" style="left:197.3px;top:239.84px;font-size:12px;color:#444;transform:scaleX(0.8776);">SEITEN</span>
<span class="t" id="t46" style="left:263.6px;top:239.84px;font-size:12px;color:#444;transform:scaleX(0.8511);">ERGEBN</span>
<span class="t" id="t47" style="left:98.2px;top:288.84px;font-size:12px;color:#444;transform:scaleX(0.9869);">Inhaltsverzeichnis</span>
<span class="t" id="t48" style="left:98.2px;top:309.84px;font-size:12px;color:#444;transform:scaleX(1.0217);">1. Zeitformen</span>
<span class="t" id="t49" style="left:113.6px;top:330.84px;font-size:12px;color:#444;transform:scaleX(0.9749);">1.1 Simple present/present tense...</span>
<span class="t" id="t50" style="left:113.6px;top:351.84px;font-size:12px;color:#444;transform:scaleX(0.9856);">1.2 Present tense continuous/pre...</span>
<span class="t" id="t51" style="left:113.6px;top:372.84px;font-size:12px;color:#444;transform:scaleX(0.9892);">1.3 Simple past - Vergangenheit</span>
<span class="t" id="t52" style="left:113.6px;top:393.84px;font-size:12px;color:#444;transform:scaleX(0.9891);">1.4 Past continuous/past progres...</span>
<span class="t" id="t53" style="left:113.6px;top:414.84px;font-size:12px;color:#444;transform:scaleX(0.9682);">1.5 Present perfect – Vergangenh...</span>
<span class="t" id="t54" style="left:113.6px;top:435.84px;font-size:12px;color:#444;transform:scaleX(0.9812);">1.6 Present perfect continuous –...</span>
<span class="t" id="t55" style="left:113.6px;top:456.84px;font-size:12px;color:#444;transform:scaleX(0.9873);">1.7 Past perfect - Vergangenheit</span>
<span class="t" id="t56" style="left:113.6px;top:477.84px;font-size:12px;color:#444;transform:scaleX(0.9802);">1.8 Past perfect continuous – Ver...</span>
<span class="t" id="t57" style="left:113.6px;top:498.84px;font-size:12px;color:#444;transform:scaleX(1.0243);">1.9 Going to future - Zukunft</span>
<span class="t" id="t58" style="left:113.6px;top:519.84px;font-size:12px;color:#444;transform:scaleX(1.0196);">1.10 Going to future - Zukunft</span>
<span class="t" id="t59" style="left:98.3px;top:540.84px;font-size:12px;color:#444;transform:scaleX(0.9706);">2. Irregular verbs</span>
<span class="t" id="t60" style="left:98.3px;top:561.84px;font-size:12px;color:#444;transform:scaleX(0.9872);">3. Reading the clock</span>
<span class="t" id="t61" style="left:98.3px;top:582.84px;font-size:12px;color:#444;transform:scaleX(1.0003);">4. Using of prepositions</span>
<span class="t" id="t62" style="left:98.3px;top:603.84px;font-size:12px;color:#444;transform:scaleX(0.9939);">5. Comparison &amp; increase</span>
<span class="t" id="t63" style="left:98.3px;top:624.84px;font-size:12px;color:#444;transform:scaleX(1.0033);">6. Adverbien</span>
<span class="t" id="t64" style="left:69.3px;top:750.27px;font-size:11.5px;color:#fff;transform:scaleX(0.8947);">SEITE 1 VON 15</span>
<span class="t" id="t65" style="left:165.3px;top:750.27px;font-size:11.5px;color:#fff;transform:scaleX(0.9158);">2763 WÖRTER</span>
<span class="t" id="t66" style="left:288.5px;top:750.27px;font-size:11.5px;color:#fff;transform:scaleX(0.8748);">DEUTSCH (DEUTSCHLAND)</span>
<span class="t" id="t67" style="left:1325.9px;top:750.27px;font-size:11.5px;color:#fff;transform:scaleX(0.9838);">120 %</span>
<span class="t" id="t68" style="left:16.0px;top:720.84px;font-size:12px;color:#fff;transform:scaleX(0.9470);">21:43</span>
<span class="t" id="t69" style="left:1.8px;top:737.84px;font-size:12px;color:#fff;transform:scaleX(0.9197);">30.04.2014</span>
<span class="t" id="t70" style="left:984.6px;top:375.94px;font-size:71.3px;color:#fff;transform:scaleX(0.9665);">2013</span>
<span class="t" id="t71" style="left:728.0px;top:516.14px;font-size:53px;color:#fff;transform:scaleX(0.9678);">Englisch Lernmappe</span>
</div>
</body></html>
